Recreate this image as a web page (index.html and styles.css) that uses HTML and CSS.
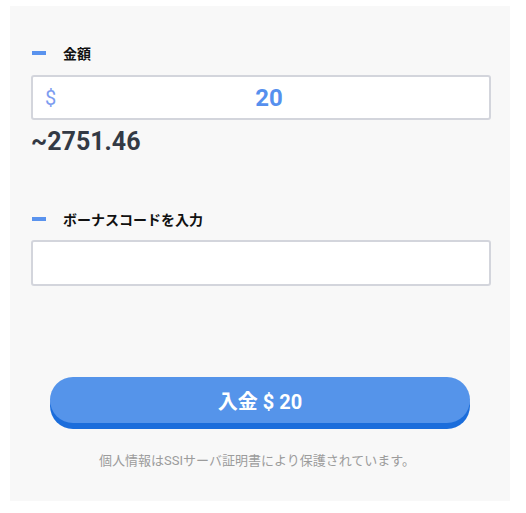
FILE: index.html
```html
<!DOCTYPE html>
<html lang="ja">
<head>
<meta charset="utf-8">
<link rel="stylesheet" href="styles.css">
</head>
<body>
<div class="panel">
  <div class="label-row"><span class="dash"></span><span class="label">金額</span></div>
  <div class="input amount-input">
    <span class="currency">$</span>
    <span class="value">20</span>
  </div>
  <div class="approx">~2751.46</div>
  <div class="label-row second"><span class="dash"></span><span class="label">ボーナスコードを入力</span></div>
  <div class="input code-input"></div>
  <button class="deposit">入金 $ 20</button>
  <p class="note">個人情報はSSIサーバ証明書により保護されています。</p>
</div>
</body>
</html>
```
FILE: styles.css
```css
* { box-sizing: border-box; }
html, body { margin: 0; padding: 0; background: #ffffff; }
body {
  font-family: Roboto, "Noto Sans CJK JP", sans-serif;
  width: 526px;
  height: 513px;
  padding: 6px 16px 0 10px;
}
.panel {
  width: 500px;
  background: #f8f8f8;
  padding: 37px 19px 30px 21px;
  display: flex;
  flex-direction: column;
}
.label-row {
  display: flex;
  align-items: center;
  height: 20px;
  padding-left: 1px;
}
.label-row.second { margin-top: 53px; }
.dash {
  width: 14px;
  height: 4px;
  background: #5a93ee;
  margin-right: 17px;
}
.label {
  font-size: 14px;
  font-weight: 700;
  color: #111111;
}
.input {
  height: 45px;
  background: #ffffff;
  border: 2px solid #d3d5dc;
  border-radius: 3px;
}
.amount-input {
  margin-top: 12px;
  position: relative;
  display: flex;
  align-items: center;
  justify-content: center;
  padding-left: 16px;
}
.currency {
  position: absolute;
  left: 12px;
  top: 50%;
  transform: translateY(-50%);
  font-size: 20px;
  color: #7c9cf0;
}
.value {
  font-size: 24px;
  font-weight: 700;
  color: #5690ee;
}
.approx {
  margin-top: 8px;
  font-size: 25px;
  line-height: 28px;
  font-weight: 700;
  color: #333a45;
}
.code-input { margin-top: 11px; height: 46px; }
.deposit {
  margin: 91px 0 0 19px;
  width: 420px;
  height: 46px;
  border: none;
  border-radius: 23px;
  background: #5594ea;
  box-shadow: 0 6px 0 #1b6ddb;
  color: #ffffff;
  font-family: Roboto, "Noto Sans CJK JP", sans-serif;
  font-size: 20px;
  font-weight: 700;
  padding: 0;
}
.note {
  margin: 28px 0 0 -8px;
  text-align: center;
  font-size: 13px;
  line-height: 20px;
  color: #9c9c9c;
}
```
